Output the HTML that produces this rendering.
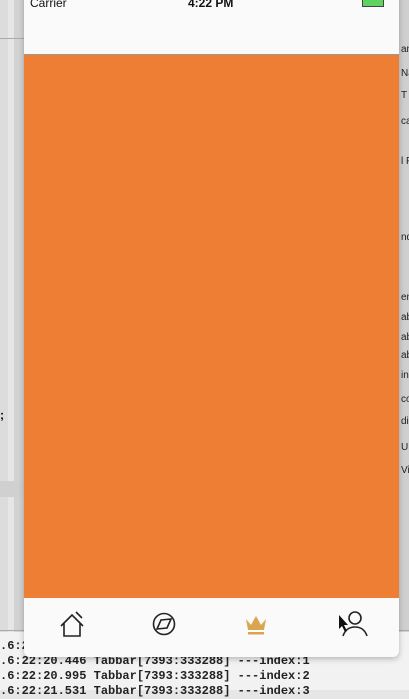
<!DOCTYPE html>
<html><head><style>
body{margin:0;width:409px;height:690px;overflow:hidden;background:#e6e6e6;font-family:"Liberation Sans",sans-serif;position:relative}
.abs{position:absolute}
.log{font-family:"Liberation Mono",monospace;font-weight:bold;font-size:12px;color:#222;left:0;white-space:pre;line-height:15px}
.r{font-size:10px;color:#222;left:401px;white-space:nowrap}
</style></head><body>
<div class="abs" style="left:0;top:0;width:8px;height:640px;background:#dcdcdc"></div>
<div class="abs" style="left:14px;top:0;width:10px;height:640px;background:#d2d2d2"></div>
<div class="abs" style="left:0;top:38px;width:24px;height:1px;background:#aaa"></div>
<div class="abs" style="left:0;top:481px;width:24px;height:16px;background:#d0d0d0"></div>
<div class="abs" style="left:0;top:408px;font-size:12px;font-weight:bold">;</div>
<div class="abs" style="left:399px;top:0;width:10px;height:690px;background:#cfcfcf"></div>
<div class="abs" style="left:0;top:632px;width:409px;height:58px;background:#f2f2f2"></div>
<div class="abs" style="left:0;top:630px;width:409px;height:1px;background:#aaa"></div>
<div class="abs log" style="top:639px">.6:22:
.6:22:20.446 Tabbar[7393:333288] ---index:1
.6:22:20.995 Tabbar[7393:333288] ---index:2
.6:22:21.531 Tabbar[7393:333288] ---index:3</div>
<div class="abs r" style="top:44px">an</div>
<div class="abs r" style="top:68px">Na</div>
<div class="abs r" style="top:90px">T</div>
<div class="abs r" style="top:116px">ca</div>
<div class="abs r" style="top:156px">l F</div>
<div class="abs r" style="top:232px">nd</div>
<div class="abs r" style="top:292px">en</div>
<div class="abs r" style="top:312px">ab</div>
<div class="abs r" style="top:332px">ab</div>
<div class="abs r" style="top:350px">ab</div>
<div class="abs r" style="top:370px">in</div>
<div class="abs r" style="top:394px">co</div>
<div class="abs r" style="top:416px">di</div>
<div class="abs r" style="top:442px">U</div>
<div class="abs r" style="top:465px">Vi</div>
<div class="abs" style="left:24px;top:-10px;width:375px;height:667px;background:#fafafa;border-radius:0 0 6px 6px;box-shadow:0 2px 6px rgba(0,0,0,.25);overflow:hidden">
 <div class="abs" style="left:6px;top:6px;font-size:12px;color:#111">Carrier</div>
 <div class="abs" style="left:164px;top:6px;font-size:12px;font-weight:bold;color:#111">4:22 PM</div>
 <div class="abs" style="left:338px;top:6px;width:20px;height:9px;background:#5fd35f;border:1px solid #444"></div>
 <div class="abs" style="left:0;top:64px;width:375px;height:1px;background:#999"></div>
 <div class="abs" style="left:0;top:65px;width:375px;height:543px;background:#ee7e33"></div>
 <svg class="abs" style="left:0;top:608px" width="375" height="59">
  <g fill="none" stroke="#222" stroke-width="1.6">
   <path d="M37 28 L48 17 L59 28 M40 25 V38 H56 V25"/>
   <path d="M52 14 L58 20"/>
   <circle cx="140" cy="26" r="10.5"/>
   <path d="M133 31 L137 22 L147 21 L143 30 Z"/>
   <circle cx="331" cy="20" r="6"/>
   <path d="M319 38 Q322 29 331 29 Q340 29 343 38"/>
  </g>
  <path d="M222 21 L227 27 L232 18 L237 27 L242 21 L240 32 H224 Z" fill="#d9a650"/>
  <rect x="224" y="34" width="16" height="2.5" fill="#d9a650"/>
  <path d="M315 17 V31 L318 28 L321 34 L323 33 L320 27 H324 Z" fill="#111"/>
 </svg>
</div>
</body></html>
